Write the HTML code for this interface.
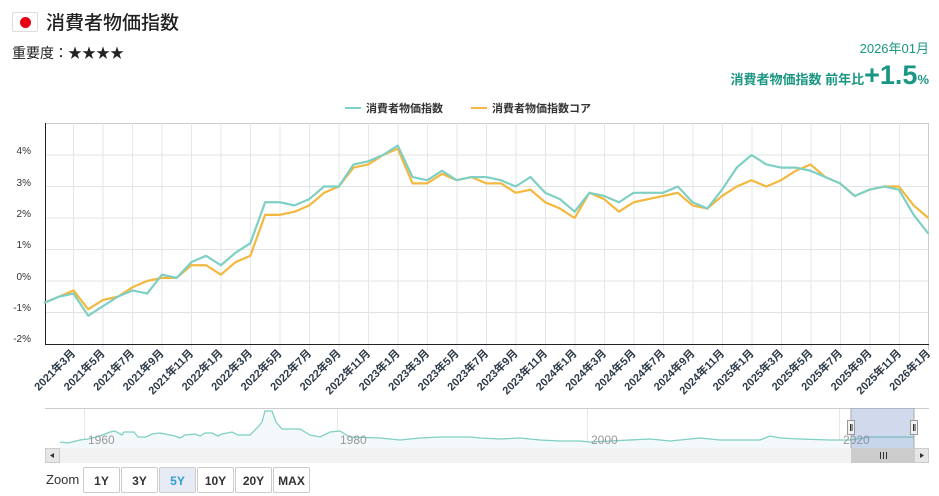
<!DOCTYPE html>
<html><head><meta charset="utf-8"><style>
html,body{margin:0;padding:0;background:#fff;width:939px;height:496px;overflow:hidden;font-family:"Liberation Sans","Noto Sans CJK JP",sans-serif;}
.abs{position:absolute}
.btn{position:absolute;top:467px;height:26px;width:37px;border:1px solid #ccc;border-radius:2px;background:#fff;font:bold 12px "Liberation Sans",sans-serif;color:#333;text-align:center;line-height:26px;box-sizing:border-box}
</style></head><body>
<div class="abs" style="left:12px;top:12px;width:26px;height:20px;border:1px solid #ddd;border-radius:2px;background:#fff;box-sizing:border-box"><div style="position:absolute;left:7px;top:4px;width:11px;height:11px;border-radius:50%;background:#e60012"></div></div>
<div class="abs" style="left:46px;top:8px;font-size:19px;color:#222;font-weight:500">消費者物価指数</div>
<div class="abs" style="left:12px;top:43px;font-size:14px;color:#222">重要度：★★★★</div>
<div class="abs" style="right:10px;top:38px;font-size:13px;color:#1a9683">2026年01月</div>
<div class="abs" style="right:10px;top:60px;color:#1a9683;font-weight:bold;white-space:nowrap"><span style="font-size:13px">消費者物価指数 前年比</span><span style="font-size:27px">+1.5</span><span style="font-size:13px">%</span></div>

<svg class="abs" style="left:0;top:0" width="939" height="496">
<g font-family="Liberation Sans,Noto Sans CJK JP,sans-serif" font-size="11" font-weight="bold" fill="#333">
<line x1="345" y1="108" x2="361" y2="108" stroke="#7ecfc4" stroke-width="2"/><text x="366" y="112">消費者物価指数</text>
<line x1="471" y1="108" x2="487" y2="108" stroke="#f3b83d" stroke-width="2"/><text x="492" y="112">消費者物価指数コア</text>
</g>
<g stroke="#e3e3e3" stroke-width="1">
<line x1="45" y1="123.5" x2="929" y2="123.5" stroke="#ccc"/>
<line x1="45" y1="155" x2="929" y2="155"/><line x1="45" y1="186.5" x2="929" y2="186.5"/><line x1="45" y1="218" x2="929" y2="218"/><line x1="45" y1="249.5" x2="929" y2="249.5"/><line x1="45" y1="281" x2="929" y2="281"/><line x1="45" y1="312.5" x2="929" y2="312.5"/>
</g>
<g stroke="#e3e6ec">
<line x1="73.5" y1="123" x2="73.5" y2="350"/><line x1="103" y1="123" x2="103" y2="350"/><line x1="132.5" y1="123" x2="132.5" y2="350"/><line x1="162" y1="123" x2="162" y2="350"/><line x1="191.5" y1="123" x2="191.5" y2="350"/><line x1="221" y1="123" x2="221" y2="350"/><line x1="250.5" y1="123" x2="250.5" y2="350"/><line x1="280" y1="123" x2="280" y2="350"/><line x1="309.5" y1="123" x2="309.5" y2="350"/><line x1="339" y1="123" x2="339" y2="350"/><line x1="368.5" y1="123" x2="368.5" y2="350"/><line x1="398" y1="123" x2="398" y2="350"/><line x1="427.5" y1="123" x2="427.5" y2="350"/><line x1="457" y1="123" x2="457" y2="350"/><line x1="486.5" y1="123" x2="486.5" y2="350"/><line x1="516" y1="123" x2="516" y2="350"/><line x1="545.5" y1="123" x2="545.5" y2="350"/><line x1="575" y1="123" x2="575" y2="350"/><line x1="604.5" y1="123" x2="604.5" y2="350"/><line x1="634" y1="123" x2="634" y2="350"/><line x1="663.5" y1="123" x2="663.5" y2="350"/><line x1="693" y1="123" x2="693" y2="350"/><line x1="722.5" y1="123" x2="722.5" y2="350"/><line x1="752" y1="123" x2="752" y2="350"/><line x1="781.5" y1="123" x2="781.5" y2="350"/><line x1="811" y1="123" x2="811" y2="350"/><line x1="840.5" y1="123" x2="840.5" y2="350"/><line x1="870" y1="123" x2="870" y2="350"/><line x1="899.5" y1="123" x2="899.5" y2="350"/><line x1="928.5" y1="123" x2="928.5" y2="350" stroke="#ccc"/>
</g>
<line x1="45.5" y1="123" x2="45.5" y2="344" stroke="#222"/>
<line x1="45" y1="344.5" x2="929" y2="344.5" stroke="#222"/>
<g font-family="Liberation Sans,sans-serif" font-size="10" fill="#333" text-anchor="end">
<text x="31" y="154">4%</text><text x="31" y="186">3%</text><text x="31" y="217">2%</text><text x="31" y="248">1%</text><text x="31" y="280">0%</text><text x="31" y="311">-1%</text><text x="31" y="342">-2%</text>
</g>
<g transform="translate(44,281) scale(14.74,-31.5)" fill="none" stroke-width="2.2" stroke-linejoin="round">
<polyline vector-effect="non-scaling-stroke" stroke="#f3b83d" points="0,-0.7 1,-0.5 2,-0.3 3,-0.9 4,-0.6 5,-0.5 6,-0.2 7,0 8,0.1 9,0.1 10,0.5 11,0.5 12,0.2 13,0.6 14,0.8 15,2.1 16,2.1 17,2.2 18,2.4 19,2.8 20,3.0 21,3.6 22,3.7 23,4.0 24,4.2 25,3.1 26,3.1 27,3.4 28,3.2 29,3.3 30,3.1 31,3.1 32,2.8 33,2.9 34,2.5 35,2.3 36,2.0 37,2.8 38,2.6 39,2.2 40,2.5 41,2.6 42,2.7 43,2.8 44,2.4 45,2.3 46,2.7 47,3.0 48,3.2 49,3.0 50,3.2 51,3.5 52,3.7 53,3.3 54,3.1 55,2.7 56,2.9 57,3.0 58,3.0 59,2.4 60,2.0"/>
<polyline vector-effect="non-scaling-stroke" stroke="#7ecfc4" points="0,-0.7 1,-0.5 2,-0.4 3,-1.1 4,-0.8 5,-0.5 6,-0.3 7,-0.4 8,0.2 9,0.1 10,0.6 11,0.8 12,0.5 13,0.9 14,1.2 15,2.5 16,2.5 17,2.4 18,2.6 19,3.0 20,3.0 21,3.7 22,3.8 23,4.0 24,4.3 25,3.3 26,3.2 27,3.5 28,3.2 29,3.3 30,3.3 31,3.2 32,3.0 33,3.3 34,2.8 35,2.6 36,2.2 37,2.8 38,2.7 39,2.5 40,2.8 41,2.8 42,2.8 43,3.0 44,2.5 45,2.3 46,2.9 47,3.6 48,4.0 49,3.7 50,3.6 51,3.6 52,3.5 53,3.3 54,3.1 55,2.7 56,2.9 57,3.0 58,2.9 59,2.1 60,1.5"/>
</g>
<g font-family="Liberation Sans,Noto Sans CJK JP,sans-serif" font-size="11" font-weight="bold" fill="#2d3a48" text-anchor="end">
<text transform="translate(76,354) rotate(-45)">2021年3月</text><text transform="translate(105.5,354) rotate(-45)">2021年5月</text><text transform="translate(135,354) rotate(-45)">2021年7月</text><text transform="translate(164.5,354) rotate(-45)">2021年9月</text><text transform="translate(194,354) rotate(-45)">2021年11月</text><text transform="translate(223.5,354) rotate(-45)">2022年1月</text><text transform="translate(253,354) rotate(-45)">2022年3月</text><text transform="translate(282.5,354) rotate(-45)">2022年5月</text><text transform="translate(312,354) rotate(-45)">2022年7月</text><text transform="translate(341.5,354) rotate(-45)">2022年9月</text><text transform="translate(371,354) rotate(-45)">2022年11月</text><text transform="translate(400.5,354) rotate(-45)">2023年1月</text><text transform="translate(430,354) rotate(-45)">2023年3月</text><text transform="translate(459.5,354) rotate(-45)">2023年5月</text><text transform="translate(489,354) rotate(-45)">2023年7月</text><text transform="translate(518.5,354) rotate(-45)">2023年9月</text><text transform="translate(548,354) rotate(-45)">2023年11月</text><text transform="translate(577.5,354) rotate(-45)">2024年1月</text><text transform="translate(607,354) rotate(-45)">2024年3月</text><text transform="translate(636.5,354) rotate(-45)">2024年5月</text><text transform="translate(666,354) rotate(-45)">2024年7月</text><text transform="translate(695.5,354) rotate(-45)">2024年9月</text><text transform="translate(725,354) rotate(-45)">2024年11月</text><text transform="translate(754.5,354) rotate(-45)">2025年1月</text><text transform="translate(784,354) rotate(-45)">2025年3月</text><text transform="translate(813.5,354) rotate(-45)">2025年5月</text><text transform="translate(843,354) rotate(-45)">2025年7月</text><text transform="translate(872.5,354) rotate(-45)">2025年9月</text><text transform="translate(902,354) rotate(-45)">2025年11月</text><text transform="translate(931,354) rotate(-45)">2026年1月</text>
</g>
<line x1="45" y1="408.5" x2="929" y2="408.5" stroke="#ccc"/>
<g stroke="#e6e6e6"><line x1="84.5" y1="409" x2="84.5" y2="448"/><line x1="337.5" y1="409" x2="337.5" y2="448"/><line x1="587.5" y1="409" x2="587.5" y2="448"/><line x1="839.5" y1="409" x2="839.5" y2="448"/></g>
<polygon fill="#f3f9fa" points="60,442 68,443 80,440 88,439 100,436 110,432 115,431 122,435 124,432 134,432 138,437 146,437 152,434 160,433 175,436 180,438 185,435 195,434 200,436 205,433 212,433 218,436 222,434 232,432 238,435 250,435 258,427 262,422 265,411 272,411 276,422 282,429 300,429 310,435 320,437 330,432 340,431 350,437 380,438 400,440 420,438 440,437 470,437 480,438 500,439 520,438 540,440 560,441 580,441 590,442 610,441 650,439 670,441 700,438 720,440 760,440 770,436 780,438 800,439 830,440 850,440 870,437 900,437 914,437 914,448 60,448"/>
<polyline fill="none" stroke="#7ecfc4" stroke-width="1.3" points="60,442 68,443 80,440 88,439 100,436 110,432 115,431 122,435 124,432 134,432 138,437 146,437 152,434 160,433 175,436 180,438 185,435 195,434 200,436 205,433 212,433 218,436 222,434 232,432 238,435 250,435 258,427 262,422 265,411 272,411 276,422 282,429 300,429 310,435 320,437 330,432 340,431 350,437 380,438 400,440 420,438 440,437 470,437 480,438 500,439 520,438 540,440 560,441 580,441 590,442 610,441 650,439 670,441 700,438 720,440 760,440 770,436 780,438 800,439 830,440 850,440 870,437 900,437 914,437"/>
<g font-family="Liberation Sans,sans-serif" font-size="12" fill="#999"><text x="88" y="444">1960</text><text x="340" y="444">1980</text><text x="591" y="444">2000</text><text x="843" y="444">2020</text></g>
<rect x="851" y="408" width="63" height="40" fill="rgba(102,133,194,0.3)"/>
<line x1="851" y1="408" x2="851" y2="448" stroke="#aaa"/><line x1="914" y1="408" x2="914" y2="448" stroke="#aaa"/>
<rect x="847.5" y="420.5" width="7" height="14" fill="#f2f2f2" stroke="#999"/><line x1="850.5" y1="424" x2="850.5" y2="431" stroke="#333"/><line x1="852" y1="424" x2="852" y2="431" stroke="#333"/>
<rect x="910.5" y="420.5" width="7" height="14" fill="#f2f2f2" stroke="#999"/><line x1="913.5" y1="424" x2="913.5" y2="431" stroke="#333"/><line x1="915" y1="424" x2="915" y2="431" stroke="#333"/>
<rect x="45" y="448" width="884" height="15" fill="#f2f2f2"/>
<rect x="45.5" y="448.5" width="14" height="14" fill="#e6e6e6" stroke="#ccc"/><path d="M54,453 L50,455.5 L54,458Z" fill="#333"/>
<rect x="851" y="448" width="63" height="15" fill="#ccc"/>
<g stroke="#333"><line x1="880.5" y1="452" x2="880.5" y2="459"/><line x1="883.5" y1="452" x2="883.5" y2="459"/><line x1="886.5" y1="452" x2="886.5" y2="459"/></g>
<rect x="914.5" y="448.5" width="14" height="14" fill="#e6e6e6" stroke="#ccc"/><path d="M920,453 L924,455.5 L920,458Z" fill="#333"/>
</svg>
<div class="abs" style="left:46px;top:472px;font-size:13px;color:#333">Zoom</div>
<div class="btn" style="left:83px">1Y</div>
<div class="btn" style="left:121px">3Y</div>
<div class="btn" style="left:159px;background:#e6ebf5;color:#2f9fcf">5Y</div>
<div class="btn" style="left:197px">10Y</div>
<div class="btn" style="left:235px">20Y</div>
<div class="btn" style="left:273px">MAX</div>
</body></html>
